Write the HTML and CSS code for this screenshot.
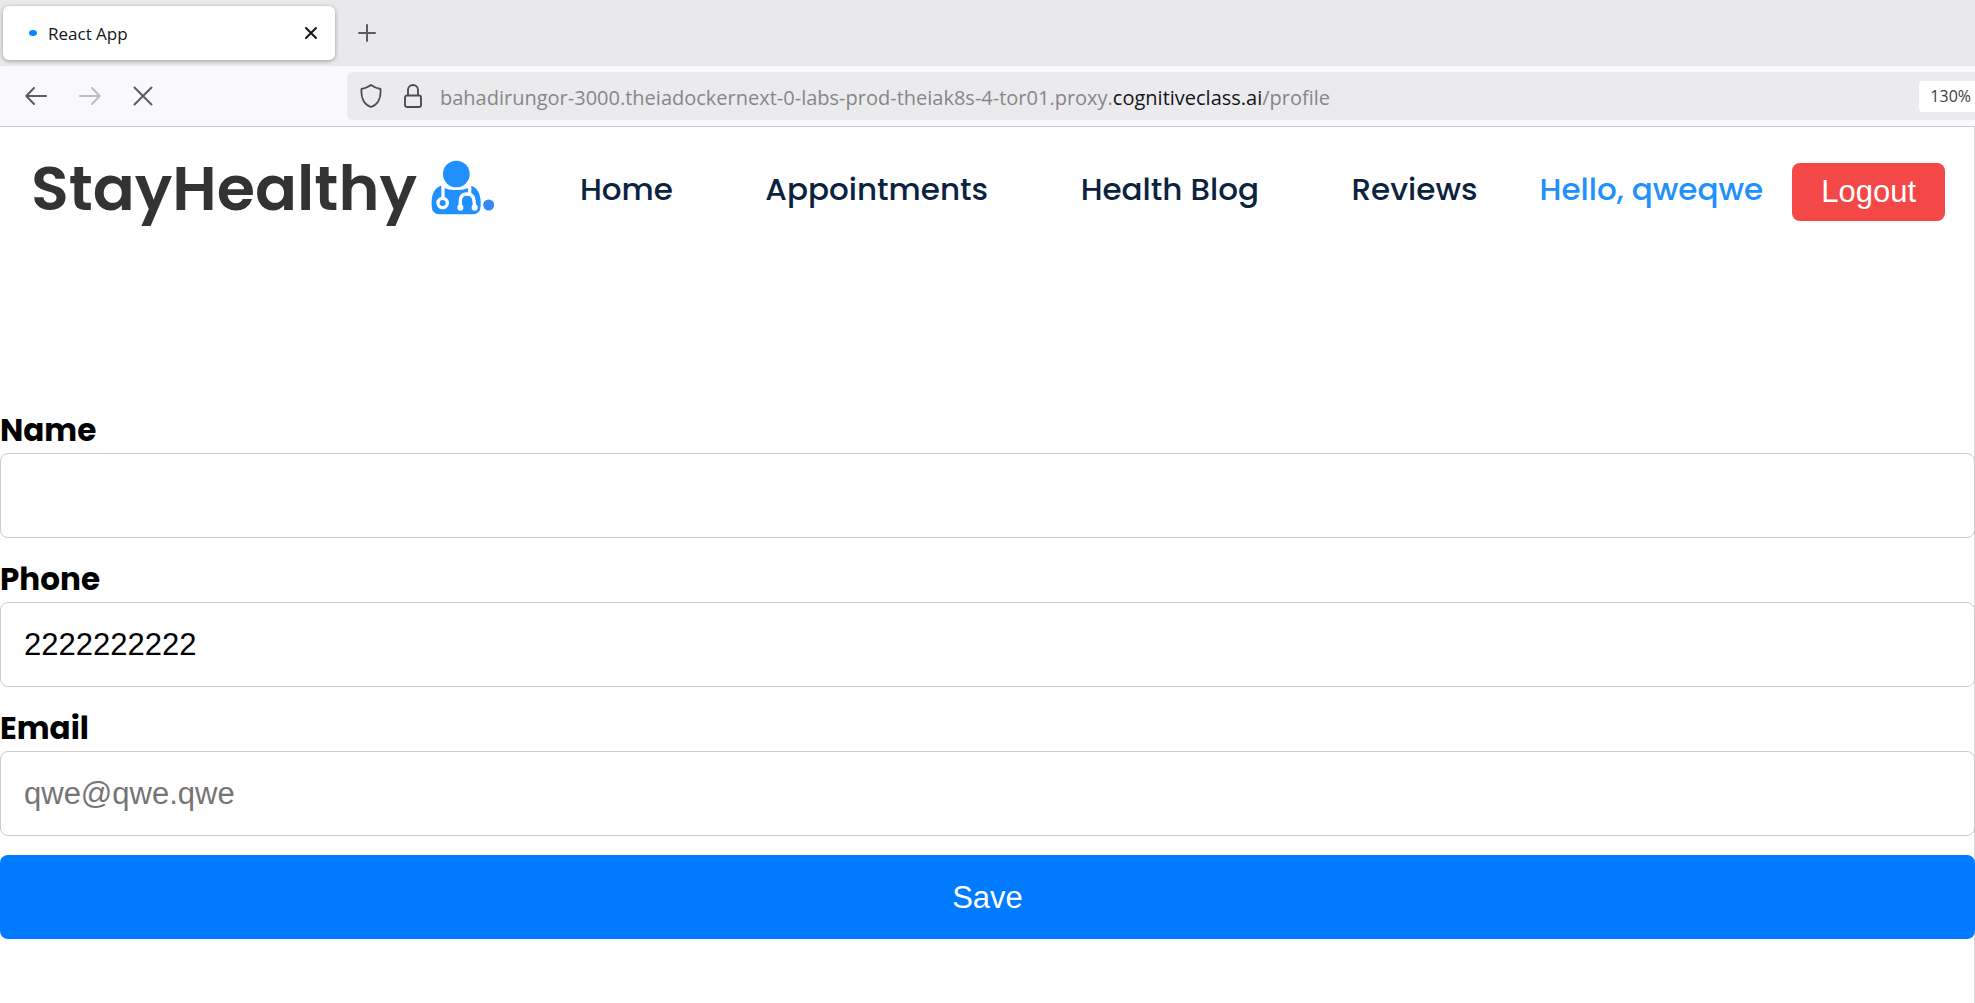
FILE: index.html
```html
<!DOCTYPE html>
<html lang="en">
<head>
<meta charset="utf-8">
<meta name="viewport" content="width=device-width, initial-scale=1">
<title>React App</title>
<link rel="stylesheet" href="styles.css">
</head>
<body>
<div class="browser">
  <div class="tabs">
    <div class="tab">
      <svg class="tab-spinner" viewBox="0 0 8 6" aria-hidden="true"><ellipse cx="4" cy="3" rx="4" ry="3"/></svg>
      <span class="tab-title">React App</span>
      <button class="icon-button" aria-label="Close tab">
        <svg width="12" height="12" viewBox="0 0 12 12"><path d="M1 1l10 10M11 1L1 11" stroke="#15141a" stroke-width="2" stroke-linecap="round"/></svg>
      </button>
    </div>
    <button class="icon-button" aria-label="New tab">
      <svg width="18" height="18" viewBox="0 0 18 18"><path d="M9 1v16M1 9h16" stroke="#5b5b66" stroke-width="2" stroke-linecap="round"/></svg>
    </button>
  </div>
  <div class="toolbar">
    <div class="nav-buttons">
      <button class="icon-button" aria-label="Back">
        <svg width="22" height="18" viewBox="0 0 22 18"><path d="M21 9H1.500M9 1L1.300 9L9 17" stroke="#5b5b66" stroke-width="2" fill="none" stroke-linecap="round" stroke-linejoin="round"/></svg>
      </button>
      <button class="icon-button" aria-label="Forward" disabled>
        <svg width="22" height="18" viewBox="0 0 22 18"><path d="M1 9h19.500M13 1l7.700 8L13 17" stroke="#bdbdc2" stroke-width="2" fill="none" stroke-linecap="round" stroke-linejoin="round"/></svg>
      </button>
      <button class="icon-button" aria-label="Stop">
        <svg width="20" height="20" viewBox="0 0 20 20"><path d="M1.500 1.500l17 17M18.500 1.500l-17 17" stroke="#5b5b66" stroke-width="2" stroke-linecap="round"/></svg>
      </button>
    </div>
    <div class="address">
      <svg width="22" height="24" viewBox="0 0 22 24" aria-hidden="true"><path d="M11 1C9 2.500 4.500 4.500 1.500 5C.8 13 3.500 20.500 11 23C18.500 20.500 21.200 13 20.500 5C17.500 4.500 13 2.500 11 1z" fill="none" stroke="#4c4c52" stroke-width="1.800" stroke-linejoin="round"/></svg>
      <svg width="18" height="24" viewBox="0 0 18 24" aria-hidden="true"><path d="M4 11V6a5 5 0 0 1 10 0v5M3 11.500h12a2 2 0 0 1 2 2V21a2 2 0 0 1-2 2H3a2 2 0 0 1-2-2v-7.500a2 2 0 0 1 2-2z" fill="none" stroke="#4c4c52" stroke-width="1.900"/></svg>
      <span class="url">bahadirungor-3000.theiadockernext-0-labs-prod-theiak8s-4-tor01.proxy.<span class="host">cognitiveclass.ai</span>/profile</span>
      <button class="zoom">130%</button>
    </div>
  </div>
</div>
<div class="page">
  <nav class="navbar">
    <a class="logo" href="#">
      <span class="logo-text">StayHealthy</span>
      <svg class="logo-icon" viewBox="32 31 192 165" aria-hidden="true">
        <circle cx="108" cy="73" r="40" fill="#2190ff"/>
        <path d="M61 108C42 116 34 134 34 158V168Q34 194 60 194H154Q181 194 181 168V158C181 134 172 116 154 108C145 116 128 121 108 121S71 116 61 108z" fill="#2190ff"/>
        <g fill="none" stroke="#fff" stroke-width="10" stroke-linecap="round">
          <path d="M68 108V144M148 108V130"/>
          <circle cx="67" cy="160" r="14"/>
          <path d="M120 173V154Q120 133 140 133T161 154L163 173"/>
          <path d="M120 173v1M163 173v1" stroke-width="18"/>
        </g>
        <circle cx="205" cy="166" r="16.500" fill="#3685fb"/>
      </svg>
    </a>
    <ul class="links">
      <li><a href="#">Home</a></li>
      <li><a href="#">Appointments</a></li>
      <li><a href="#">Health Blog</a></li>
      <li><a href="#">Reviews</a></li>
    </ul>
    <div class="account">
      <span class="hello">Hello, qweqwe</span>
      <button class="logout">Logout</button>
    </div>
  </nav>
  <form class="profile">
    <label for="name">Name</label>
    <input id="name" type="text">
    <label for="phone">Phone</label>
    <input id="phone" type="text" value="2222222222">
    <label for="email">Email</label>
    <input id="email" type="email" placeholder="qwe@qwe.qwe">
    <button class="save" type="submit">Save</button>
  </form>
</div>
</body>
</html>
```
FILE: styles.css
```css
* { box-sizing: border-box; }
body {
  margin: 0;
  min-height: 100vh;
  display: flex;
  flex-direction: column;
  background: #fff;
  font-family: Poppins, Inter, sans-serif;
}
button { border: 0; cursor: pointer; }
a { text-decoration: none; }
.icon-button { display: flex; padding: 0; background: none; }

.browser { font-family: "Segoe UI", "Open Sans", sans-serif; }
.tabs {
  display: flex;
  align-items: center;
  gap: 23px;
  height: 66px;
  padding-left: 3px;
  background: #e9e9eb;
}
.tab {
  display: flex;
  align-items: center;
  gap: 11px;
  width: 332px;
  height: 54px;
  padding: 0 18px 0 26px;
  border-radius: 6px;
  background: #fff;
  box-shadow: 0 1px 4px rgba(0, 0, 0, 0.35);
}
.tab-spinner { width: 8px; height: 6px; fill: #0a84ff; }
.tab-title { flex: 1; font-size: 17px; color: #15141a; }
.toolbar {
  display: flex;
  height: 61px;
  padding: 6px 0 6px 25px;
  border-bottom: 1px solid #ccc;
  background: #f9f9fb;
}
.nav-buttons {
  display: flex;
  align-items: center;
  gap: 32px;
  width: 322px;
}
.address {
  flex: 1;
  display: flex;
  align-items: center;
  gap: 22px;
  padding-left: 13px;
  border-radius: 6px 0 0 6px;
  background: #ebebed;
}
.url {
  flex: 1;
  margin-left: -4px;
  padding-top: 2px;
  font-family: "Segoe UI", "Open Sans", sans-serif;
  font-size: 20px;
  white-space: nowrap;
  color: #86868a;
}
.host { color: #15141a; }
.zoom {
  height: 31px;
  padding: 0 4px 0 11px;
  border-radius: 4px 0 0 4px;
  background: #fff;
  font: 16px "Segoe UI", "Open Sans", sans-serif;
  color: #3b3b44;
}

.page { flex: 1; border-right: 1px solid #dcdcdc; }
.navbar {
  display: flex;
  align-items: center;
  height: 124px;
  padding: 0 29px 0 31px;
}
.logo { display: flex; align-items: center; gap: 14px; }
.logo-text {
  font-size: 62px;
  font-weight: 600;
  line-height: 80px;
  color: #333;
}
.logo-icon { width: 64px; height: 55px; margin-bottom: 4px; }
.links {
  flex: 1;
  display: flex;
  justify-content: space-between;
  margin: 0;
  padding: 0 62px 0 85px;
  list-style: none;
  font-size: 31px;
  font-weight: 500;
}
.links a { color: #0c2340; }
.account { display: flex; align-items: center; gap: 29px; }
.hello { font-size: 31px; font-weight: 500; color: #2190ff; }
.logout {
  height: 58px;
  margin-top: 6px;
  padding: 0 29px;
  border-radius: 8px;
  background: #f44747;
  font: 31px "Liberation Sans", Arial, sans-serif;
  color: #fff;
}

.profile {
  display: flex;
  flex-direction: column;
  margin-right: -1px;
  padding-top: 157px;
}
.profile label {
  margin-bottom: 1px;
  font-size: 31px;
  font-weight: 700;
  line-height: 44px;
  color: #000;
}
.profile input {
  width: 100%;
  height: 85px;
  margin-bottom: 19px;
  padding: 0 23px;
  border: 1px solid #ccc;
  border-radius: 8px;
  background: #fff;
  font: 31px "Liberation Sans", Arial, sans-serif;
  color: #000;
}
.profile input::placeholder { color: #757575; }
.save {
  height: 84px;
  padding-top: 2px;
  border-radius: 8px;
  background: #007bff;
  font: 31px "Liberation Sans", Arial, sans-serif;
  color: #fff;
}
```
